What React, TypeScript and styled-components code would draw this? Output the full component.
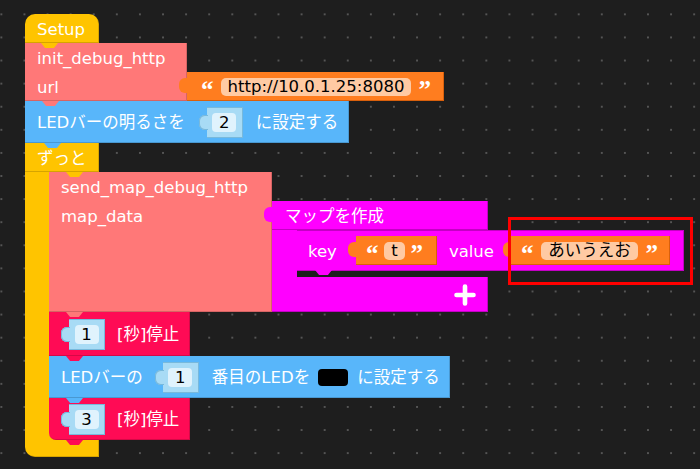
import React from 'react'
import styled, { createGlobalStyle, css } from 'styled-components'

const colors = {
    bg: '#1e1e1e',
    dot: '#555555',
    hat: '#ffc400',
    func: '#ff7878',
    str: '#ff7d1f',
    strEdge: '#d9600c',
    strField: '#ffcaa3',
    led: '#58b6fa',
    num: '#a8dbf5',
    numEdge: '#78b9dc',
    numField: '#e0f3fd',
    map: '#ff00ff',
    mapEdge: '#c400c4',
    wait: '#ff0b55',
    mark: '#ff0000',
}

const GlobalStyle = createGlobalStyle`
    html, body {
        margin: 0;
        padding: 0;
        background: ${ colors.bg };
    }
    body {
        font-family: "DejaVu Sans", "Noto Sans CJK JP", sans-serif;
        font-size: 16.5px;
    }
`

const WorkspaceS = styled.main`
    position: relative;
    box-sizing: border-box;
    width: 700px;
    height: 469px;
    overflow: hidden;
    padding: 14px 0 0 25px;
    background-color: ${ colors.bg };
    background-image: radial-gradient(circle, ${ colors.dot } 0.9px, transparent 1.4px);
    background-size: 23.1px 23.1px;
    background-position: -10.2px 2.8px;
`

const StackS = styled.div`
    display: flex;
    flex-direction: column;
    align-items: flex-start;
`

// notch that hangs below a statement block into the next one
const notch = (color: string, left: number) => css`
    &::after {
        content: '';
        position: absolute;
        left: ${ left }px;
        bottom: -5px;
        width: 17px;
        height: 5px;
        background: ${ color };
        clip-path: polygon(0 0, 100% 0, 76% 100%, 24% 100%);
        z-index: 3;
    }
`

// puzzle tab on the left of a value block
const tab = (color: string, top: number, edge?: string) => css`
    &::before {
        content: '';
        position: absolute;
        left: -8px;
        top: ${ top }px;
        width: 9px;
        height: 15px;
        background: ${ color };
        border-radius: 6px 0 0 6px;
        ${ edge ? `box-shadow: inset 1px 0 0 ${ edge }, inset 0 1px 0 ${ edge }, inset 0 -1px 0 ${ edge };` : '' }
    }
`

const BlockS = styled.div<{ $bg: string, $w: number, $h: number, $notch?: number }>`
    position: relative;
    box-sizing: border-box;
    display: flex;
    align-items: center;
    flex-shrink: 0;
    width: ${ ({ $w }) => $w }px;
    height: ${ ({ $h }) => $h }px;
    background: ${ ({ $bg }) => $bg };
    color: #fff;
    white-space: nowrap;
    box-shadow: inset -1px -1px 0 rgba(0, 0, 0, 0.16);
    ${ ({ $bg, $notch }) => $notch !== undefined && notch($bg, $notch) }
`

const HatBlockS = styled(BlockS)`
    padding-left: 12px;
    border-radius: 10px 10px 0 0;
`

const ForeverTopS = styled(BlockS)`
    padding-left: 12px;
`

const FuncBlockS = styled(BlockS)`
    flex-direction: column;
    align-items: flex-start;
    padding-left: 12px;
`

const FuncLineS = styled.div`
    display: flex;
    align-items: center;
    height: 29px;
`

const InlineBlockS = styled(BlockS)<{ $pad: number, $round?: boolean }>`
    padding-left: ${ ({ $pad }) => $pad }px;
    ${ ({ $round }) => $round && 'border-bottom-left-radius: 7px;' }
`

const StatementRowS = styled.div`
    display: flex;
    align-items: flex-start;
`

const ValueSlotS = styled.div<{ $top: number }>`
    padding-top: ${ ({ $top }) => $top }px;
`

const LabelS = styled.span<{ $gap?: number }>`
    margin-left: ${ ({ $gap }) => $gap ?? 0 }px;
    padding-top: 3px;
    color: #fff;
    line-height: 1;
`

const StrBlockS = styled.div<{ $w: number, $padL: number, $padR: number, $gap?: number }>`
    position: relative;
    box-sizing: border-box;
    display: flex;
    align-items: center;
    justify-content: space-between;
    flex-shrink: 0;
    width: ${ ({ $w }) => $w }px;
    height: 29px;
    margin-left: ${ ({ $gap }) => $gap ?? 0 }px;
    padding: 0 ${ ({ $padR }) => $padR }px 0 ${ ({ $padL }) => $padL }px;
    background: ${ colors.str };
    box-shadow: inset -1px -1px 0 ${ colors.strEdge };
    ${ tab(colors.str, 6) }
`

const QuoteS = styled.span`
    font-family: "Liberation Serif", serif;
    font-size: 25px;
    font-weight: bold;
    line-height: 25px;
    height: 25px;
    color: #fff;
    margin-top: 6px;
`

const StrFieldS = styled.span`
    display: inline-flex;
    align-items: center;
    box-sizing: border-box;
    height: 18px;
    padding: 2px 7px 0;
    border-radius: 5px;
    background: ${ colors.strField };
    color: #000;
    line-height: 1;
`

const NumSocketS = styled.div<{ $gap?: number }>`
    position: relative;
    box-sizing: border-box;
    display: flex;
    align-items: center;
    justify-content: center;
    flex-shrink: 0;
    width: 36px;
    height: 31px;
    margin-left: ${ ({ $gap }) => $gap ?? 0 }px;
    background: ${ colors.num };
    border: 1px solid ${ colors.numEdge };
    border-left: none;
    ${ tab(colors.num, 7, colors.numEdge) }
`

const NumFieldS = styled.span`
    display: flex;
    align-items: center;
    justify-content: center;
    box-sizing: border-box;
    width: 24px;
    height: 19px;
    padding-top: 2px;
    border-radius: 4px;
    background: ${ colors.numField };
    color: #000;
    line-height: 1;
`

const SwatchS = styled.span<{ $gap?: number, $color: string }>`
    display: inline-block;
    width: 30px;
    height: 17px;
    margin-left: ${ ({ $gap }) => $gap ?? 0 }px;
    border-radius: 4px;
    background: ${ ({ $color }) => $color };
`

const ForeverS = styled.div`
    display: flex;
    flex-direction: column;
    align-items: flex-start;
`

const ForeverMidS = styled.div`
    display: flex;
    align-items: stretch;
    background: linear-gradient(to right, ${ colors.hat } 0 32px, transparent 32px);
`

const ForeverArmS = styled.div`
    width: 24px;
    background: ${ colors.hat };
`

const ForeverBottomS = styled.div`
    width: 74px;
    height: 17px;
    background: ${ colors.hat };
    border-bottom-left-radius: 10px;
    box-shadow: inset -1px -1px 0 rgba(0, 0, 0, 0.16);
`

const MapBlockS = styled.div`
    position: relative;
    display: flex;
    flex-direction: column;
    align-items: flex-start;
    ${ tab(colors.map, 6) }
`

const MapPartS = styled(BlockS)`
    padding-left: 13px;
    box-shadow: inset -1px -1px 0 ${ colors.mapEdge };
`

const MapMidS = styled.div`
    display: flex;
    align-items: flex-start;
    height: 47px;
`

const MapArmS = styled.div`
    width: 25px;
    height: 100%;
    background: ${ colors.map };
`

const KeyBlockS = styled(BlockS)`
    padding-left: 11px;
    border: 1px solid ${ colors.mapEdge };
    border-left: none;
    box-shadow: none;
    ${ notch(colors.map, 18) }
`

const PlusBtnS = styled.span`
    display: flex;
    margin-left: auto;
    margin-right: 12px;
`

const MarkBoxS = styled.div`
    position: absolute;
    left: 508px;
    top: 217px;
    width: 185px;
    height: 68px;
    box-sizing: border-box;
    border: 3px solid ${ colors.mark };
    pointer-events: none;
`

const TextValue: React.FC<{ value: string, w: number, padL: number, padR: number, gap?: number }> = ({
    value, w, padL, padR, gap
}) => (
    <StrBlockS $w={ w } $padL={ padL } $padR={ padR } $gap={ gap }>
        <QuoteS>“</QuoteS>
        <StrFieldS>{ value }</StrFieldS>
        <QuoteS>”</QuoteS>
    </StrBlockS>
)

const NumValue: React.FC<{ value: number, gap?: number }> = ({ value, gap }) => (
    <NumSocketS $gap={ gap }>
        <NumFieldS>{ value }</NumFieldS>
    </NumSocketS>
)

const WaitBlock: React.FC<{ sec: number, h: number, last?: boolean }> = ({ sec, h, last }) => (
    <InlineBlockS $bg={ colors.wait } $w={ 141 } $h={ h } $pad={ 20 } $notch={ 17 } $round={ last }>
        <NumValue value={ sec } />
        <LabelS $gap={ 12 }>[秒]停止</LabelS>
    </InlineBlockS>
)

const App: React.FC = () => {
    return (
        <>
            <GlobalStyle />
            <WorkspaceS>
                <StackS>
                    <HatBlockS $bg={ colors.hat } $w={ 74 } $h={ 29 } $notch={ 16 }>
                        <LabelS>Setup</LabelS>
                    </HatBlockS>

                    <StatementRowS>
                        <FuncBlockS $bg={ colors.func } $w={ 162 } $h={ 58 } $notch={ 17 }>
                            <FuncLineS><LabelS>init_debug_http</LabelS></FuncLineS>
                            <FuncLineS><LabelS>url</LabelS></FuncLineS>
                        </FuncBlockS>
                        <ValueSlotS $top={ 29 }>
                            <TextValue value="http://10.0.1.25:8080" w={ 257 } padL={ 14 } padR={ 13 } />
                        </ValueSlotS>
                    </StatementRowS>

                    <InlineBlockS $bg={ colors.led } $w={ 324 } $h={ 42 } $pad={ 12 } $notch={ 19 }>
                        <LabelS>LEDバーの明るさを</LabelS>
                        <NumValue value={ 2 } gap={ 22 } />
                        <LabelS $gap={ 13 }>に設定する</LabelS>
                    </InlineBlockS>

                    <ForeverS>
                        <ForeverTopS $bg={ colors.hat } $w={ 74 } $h={ 29 } $notch={ 41 }>
                            <LabelS>ずっと</LabelS>
                        </ForeverTopS>
                        <ForeverMidS>
                            <ForeverArmS />
                            <StackS>
                                <StatementRowS>
                                    <FuncBlockS $bg={ colors.func } $w={ 223 } $h={ 140 } $notch={ 17 }>
                                        <FuncLineS><LabelS>send_map_debug_http</LabelS></FuncLineS>
                                        <FuncLineS><LabelS>map_data</LabelS></FuncLineS>
                                    </FuncBlockS>
                                    <ValueSlotS $top={ 29 }>
                                        <MapBlockS>
                                            <MapPartS $bg={ colors.map } $w={ 216 } $h={ 29 }>
                                                <LabelS>マップを作成</LabelS>
                                            </MapPartS>
                                            <MapMidS>
                                                <MapArmS />
                                                <KeyBlockS $bg={ colors.map } $w={ 387 } $h={ 41 }>
                                                    <LabelS>key</LabelS>
                                                    <TextValue value="t" w={ 81 } padL={ 10 } padR={ 14 } gap={ 19 } />
                                                    <LabelS $gap={ 12 }>value</LabelS>
                                                    <TextValue value="あいうえお" w={ 159 } padL={ 10 } padR={ 12 } gap={ 17 } />
                                                </KeyBlockS>
                                            </MapMidS>
                                            <MapPartS $bg={ colors.map } $w={ 216 } $h={ 35 }>
                                                <PlusBtnS>
                                                    <svg width="22" height="22" viewBox="0 0 22 22">
                                                        <path d="M11 2.5v17M2.5 11h17" stroke="#fff" strokeWidth="4.6" strokeLinecap="round" fill="none" />
                                                    </svg>
                                                </PlusBtnS>
                                            </MapPartS>
                                        </MapBlockS>
                                    </ValueSlotS>
                                </StatementRowS>

                                <WaitBlock sec={ 1 } h={ 44 } />

                                <InlineBlockS $bg={ colors.led } $w={ 401 } $h={ 42 } $pad={ 12 } $notch={ 17 }>
                                    <LabelS>LEDバーの</LabelS>
                                    <NumValue value={ 1 } gap={ 20 } />
                                    <LabelS $gap={ 13 }>番目のLEDを</LabelS>
                                    <SwatchS $gap={ 8 } $color="#000" />
                                    <LabelS $gap={ 9 }>に設定する</LabelS>
                                </InlineBlockS>

                                <WaitBlock sec={ 3 } h={ 42 } last />
                            </StackS>
                        </ForeverMidS>
                        <ForeverBottomS />
                    </ForeverS>
                </StackS>
                <MarkBoxS />
            </WorkspaceS>
        </>
    )
}

export default App
